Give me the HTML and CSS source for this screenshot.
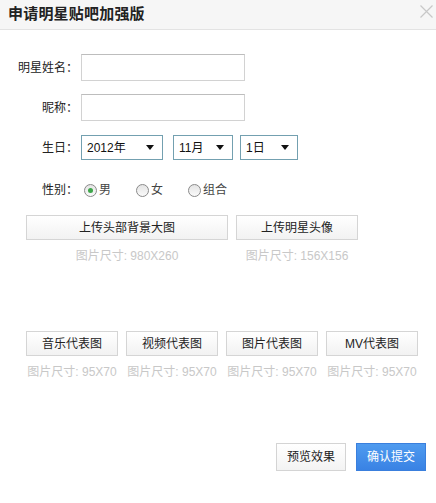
FILE: index.html
```html
<!DOCTYPE html>
<html>
<head>
<meta charset="utf-8">
<link rel="stylesheet" href="styles.css">
</head>
<body>
<div class="dialog">
  <div class="header">
    <span class="title">申请明星贴吧加强版</span>
    <svg class="close" width="13" height="13" viewBox="0 0 13 13"><path d="M0.5 0.5 L12.5 12.5 M12.5 0.5 L0.5 12.5" stroke="#c8c8c8" stroke-width="1.2" fill="none"/></svg>
  </div>
  <div class="form">
    <div class="row r-name">
      <label class="label">明星姓名：</label>
      <div class="input"></div>
    </div>
    <div class="row r-nick">
      <label class="label">昵称：</label>
      <div class="input"></div>
    </div>
    <div class="row r-birth">
      <label class="label">生日：</label>
      <div class="select s-year"><span>2012年</span><i class="arrow"></i></div>
      <div class="select s-month"><span>11月</span><i class="arrow"></i></div>
      <div class="select s-day"><span>1日</span><i class="arrow"></i></div>
    </div>
    <div class="row r-sex">
      <label class="label">性别：</label>
      <span class="radio checked"></span><span class="opt">男</span>
      <span class="radio"></span><span class="opt">女</span>
      <span class="radio"></span><span class="opt">组合</span>
    </div>
    <div class="uploads top">
      <div class="up">
        <div class="btn w-big">上传头部背景大图</div>
        <div class="cap">图片尺寸: 980X260</div>
      </div>
      <div class="up">
        <div class="btn w-mid">上传明星头像</div>
        <div class="cap">图片尺寸: 156X156</div>
      </div>
    </div>
    <div class="uploads bottom">
      <div class="up"><div class="btn w-sm">音乐代表图</div><div class="cap">图片尺寸: 95X70</div></div>
      <div class="up"><div class="btn w-sm">视频代表图</div><div class="cap">图片尺寸: 95X70</div></div>
      <div class="up"><div class="btn w-sm">图片代表图</div><div class="cap">图片尺寸: 95X70</div></div>
      <div class="up"><div class="btn w-sm">MV代表图</div><div class="cap">图片尺寸: 95X70</div></div>
    </div>
  </div>
  <div class="footer">
    <div class="fbtn preview">预览效果</div>
    <div class="fbtn confirm">确认提交</div>
  </div>
</div>
</body>
</html>
```
FILE: styles.css
```css
* { box-sizing: border-box; }
html, body { margin: 0; padding: 0; background: #fff; }
body {
  font-family: "Liberation Sans", "Noto Sans CJK SC", sans-serif;
  font-size: 12px;
  color: #333;
  width: 436px;
  height: 503px;
  overflow: hidden;
}
.dialog { width: 436px; height: 503px; display: flex; flex-direction: column; }
.header {
  height: 30px;
  background: #f6f6f6;
  border-bottom: 1px solid #e3e3e3;
  display: flex;
  align-items: center;
  justify-content: space-between;
  padding: 0 3px 2px 8px;
}
.title {
  font-size: 15px;
  font-weight: bold;
  color: #222;
  line-height: 16px;
  letter-spacing: 0.2px;
}
.close { margin-top: -4px; }
.form { padding-top: 24px; }
.row { display: flex; align-items: center; }
.label {
  width: 78px;
  text-align: right;
  color: #222;
  line-height: 16px;
  flex: none;
}
.input {
  margin-left: 3px;
  width: 164px;
  height: 27px;
  border: 1px solid #d2d2d2;
  border-top-color: #bdbdbd;
  background: #fff;
}
.r-nick { margin-top: 13px; }
.r-birth { margin-top: 14px; }
.select {
  height: 25px;
  border: 1px solid #73a0b0;
  display: flex;
  align-items: center;
  justify-content: space-between;
  padding: 0 8px 0 5px;
  color: #111;
  background: #fff;
}
.select span { line-height: 14px; padding-top: 1px; }
.s-year { margin-left: 3px; width: 82px; }
.s-month { margin-left: 10px; width: 60px; }
.s-day { margin-left: 7px; width: 58px; }
.arrow {
  width: 0; height: 0;
  border-left: 4px solid transparent;
  border-right: 4px solid transparent;
  border-top: 5px solid #111;
}
.r-sex { margin-top: 22px; }
.radio {
  width: 13px; height: 13px;
  border-radius: 50%;
  border: 1px solid #8a8a8a;
  background: linear-gradient(#e4e4e4, #fafafa);
  margin-left: 6px;
  display: inline-flex;
  align-items: center;
  justify-content: center;
  flex: none;
}
.radio.checked::after {
  content: "";
  width: 5px; height: 5px;
  border-radius: 50%;
  background: #3ea54a;
}
.opt { margin-left: 2px; color: #444; line-height: 16px; }
.opt + .radio { margin-left: 25px; }
.uploads { display: flex; gap: 8px; padding-left: 26px; }
.uploads.top { margin-top: 17px; }
.uploads.bottom { margin-top: 68px; }
.up { display: flex; flex-direction: column; align-items: center; }
.btn {
  height: 25px;
  border: 1px solid #d5d5d5;
  background: linear-gradient(#ffffff, #f2f2f2);
  display: flex;
  align-items: center;
  justify-content: center;
  color: #222;
  line-height: 14px;
}
.w-big { width: 202px; }
.w-mid { width: 122px; }
.w-sm { width: 92px; }
.cap {
  margin-top: 9px;
  color: #c8c8c8;
  line-height: 14px;
  white-space: nowrap;
}
.footer {
  margin-top: auto;
  display: flex;
  justify-content: flex-end;
  gap: 10px;
  padding: 0 10px 32px 0;
}
.fbtn {
  width: 70px;
  height: 28px;
  display: flex;
  align-items: center;
  justify-content: center;
  line-height: 14px;
}
.preview {
  border: 1px solid #d4d4d4;
  background: linear-gradient(#ffffff, #f3f3f3);
  color: #222;
}
.confirm {
  border: 1px solid #3a7fdd;
  background: linear-gradient(#4f9bef, #3982e4);
  color: #fff;
}
```
